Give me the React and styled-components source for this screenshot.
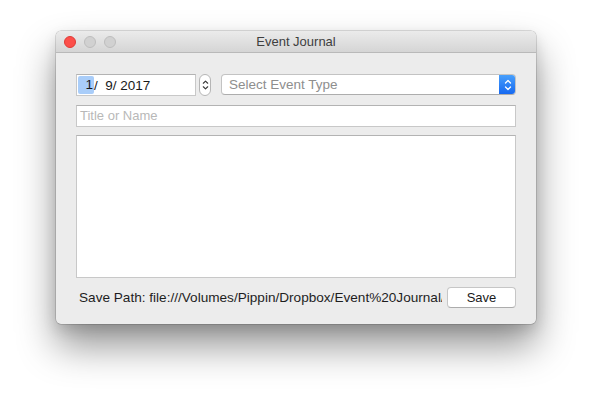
import React from "react";
import styled, { createGlobalStyle } from "styled-components";

const Global = createGlobalStyle`
  html, body { margin: 0; padding: 0; background: #ffffff; }
  body { font-family: "Liberation Sans", "Helvetica Neue", Arial, sans-serif; }
`;

const Stage = styled.div`
  width: 592px;
  height: 404px;
  padding: 31px 0 0 56px;
  box-sizing: border-box;
  background: #ffffff;
  overflow: hidden;
`;

const Window = styled.div`
  width: 480px;
  height: 293px;
  border-radius: 5px;
  background: #ececec;
  display: flex;
  flex-direction: column;
  overflow: hidden;
  box-shadow: 0 0 0 0.5px rgba(0, 0, 0, 0.25), 0 22px 38px rgba(0, 0, 0, 0.42),
    0 6px 14px rgba(0, 0, 0, 0.12);
`;

const TitleBar = styled.div`
  height: 22px;
  flex: none;
  display: flex;
  align-items: center;
  position: relative;
  background: linear-gradient(#ebebeb, #d5d5d5);
  border-bottom: 1px solid #b9b9b9;
  box-sizing: border-box;
  padding-left: 8px;
  gap: 8px;
`;

const Light = styled.span`
  width: 12px;
  height: 12px;
  border-radius: 50%;
  box-sizing: border-box;
  background: ${(p) => (p.$red ? "#fc4f4a" : "#d1d1d1")};
  border: 0.5px solid ${(p) => (p.$red ? "#de3b36" : "#bdbdbd")};
`;

const Title = styled.div`
  position: absolute;
  left: 0;
  right: 0;
  top: 0;
  line-height: 22px;
  text-align: center;
  font-size: 13px;
  color: #3e3e3e;
  pointer-events: none;
`;

const Content = styled.div`
  flex: 1;
  display: flex;
  flex-direction: column;
  padding: 21px 20px 0 20px;
`;

const Row = styled.div`
  display: flex;
  align-items: center;
`;

const DateField = styled.div`
  width: 120px;
  height: 22px;
  box-sizing: border-box;
  background: #fff;
  border: 1px solid #c8c8c8;
  border-top-color: #b3b3b3;
  display: flex;
  align-items: center;
  font-size: 13.5px;
  color: #1a1a1a;
  padding-left: 1px;
`;

const Segment = styled.span`
  display: inline-block;
  box-sizing: border-box;
  height: 18px;
  line-height: 18px;
  width: ${(p) => p.$w}px;
  padding-right: 1px;
  text-align: right;
  background: ${(p) => (p.$sel ? "#a9cdf9" : "transparent")};
  border-radius: ${(p) => (p.$sel ? "2px" : "0")};
`;

const Stepper = styled.div`
  width: 12px;
  height: 22px;
  margin-left: 3px;
  box-sizing: border-box;
  border: 1px solid #b6b6b6;
  border-radius: 6px;
  background: #fff;
  display: flex;
  align-items: center;
  justify-content: center;
`;

const Select = styled.div`
  margin-left: 10px;
  flex: 1;
  height: 21px;
  align-self: flex-start;
  box-sizing: border-box;
  background: #fff;
  border: 1px solid #c3c3c3;
  border-bottom-color: #adadad;
  border-radius: 4px;
  display: flex;
  align-items: center;
  overflow: hidden;
`;

const SelectText = styled.span`
  flex: 1;
  padding-left: 7px;
  font-size: 13.5px;
  color: #8e8e8e;
`;

const SelectArrow = styled.span`
  width: 17px;
  align-self: stretch;
  margin: -1px -1px -1px 0;
  background: linear-gradient(#4aa2fc, #1466f0);
  border-radius: 0 4px 4px 0;
  display: flex;
  align-items: center;
  justify-content: center;
`;

const TextField = styled.div`
  margin-top: 9px;
  height: 22px;
  box-sizing: border-box;
  background: #fff;
  border: 1px solid #c8c8c8;
  border-top-color: #b3b3b3;
  font-size: 13px;
  color: #b8b8b8;
  padding-left: 3px;
  line-height: 20px;
`;

const TextArea = styled.div`
  margin-top: 8px;
  height: 143px;
  box-sizing: border-box;
  background: #fff;
  border: 1px solid #c8c8c8;
  border-top-color: #b3b3b3;
`;

const Footer = styled.div`
  display: flex;
  align-items: center;
  margin-top: 9px;
`;

const PathLabel = styled.div`
  width: 366px;
  padding-left: 3px;
  box-sizing: border-box;
  white-space: nowrap;
  overflow: hidden;
  font-size: 13.6px;
  color: #1e1e1e;
`;

const Button = styled.div`
  margin-left: 5px;
  width: 69px;
  height: 21px;
  box-sizing: border-box;
  background: #fff;
  border: 1px solid #c6c6c6;
  border-bottom-color: #acacac;
  border-radius: 4px;
  display: flex;
  align-items: center;
  justify-content: center;
  font-size: 13px;
  color: #1a1a1a;
`;

const Chevrons = ({ color, w = 8 }) => (
  <svg width={w} height="14" viewBox="0 0 8 14">
    <path d="M1.5 5 L4 2.5 L6.5 5" fill="none" stroke={color} strokeWidth="1.3" strokeLinecap="round" strokeLinejoin="round" />
    <path d="M1.5 9 L4 11.5 L6.5 9" fill="none" stroke={color} strokeWidth="1.3" strokeLinecap="round" strokeLinejoin="round" />
  </svg>
);

export default function App() {
  return (
    <>
      <Global />
      <Stage>
        <Window>
          <TitleBar>
            <Light $red />
            <Light />
            <Light />
            <Title>Event Journal</Title>
          </TitleBar>
          <Content>
            <Row>
              <DateField>
                <Segment $w={16} $sel>1</Segment>
                <span>/&nbsp;&nbsp;9/ 2017</span>
              </DateField>
              <Stepper>
                <Chevrons color="#3a3a3a" w={7} />
              </Stepper>
              <Select>
                <SelectText>Select Event Type</SelectText>
                <SelectArrow>
                  <Chevrons color="#ffffff" />
                </SelectArrow>
              </Select>
            </Row>
            <TextField>Title or Name</TextField>
            <TextArea />
            <Footer>
              <PathLabel>Save Path: file:///Volumes/Pippin/Dropbox/Event%20Journal/Journal.txt</PathLabel>
              <Button>Save</Button>
            </Footer>
          </Content>
        </Window>
      </Stage>
    </>
  );
}
